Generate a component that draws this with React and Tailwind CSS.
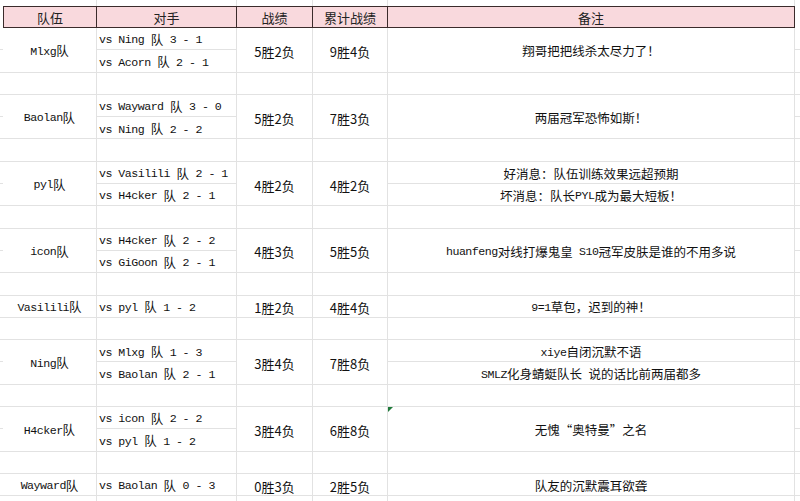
import React from "react";

const teams = [
  {
    name: "Mlxg队",
    matches: ["vs Ning 队 3 - 1", "vs Acorn 队 2 - 1"],
    record: "5胜2负",
    total: "9胜4负",
    notes: ["翔哥把把线杀太尽力了！"],
  },
  {
    name: "Baolan队",
    matches: ["vs Wayward 队 3 - 0", "vs Ning 队 2 - 2"],
    record: "5胜2负",
    total: "7胜3负",
    notes: ["两届冠军恐怖如斯！"],
  },
  {
    name: "pyl队",
    matches: ["vs Vasilili 队 2 - 1", "vs H4cker 队 2 - 1"],
    record: "4胜2负",
    total: "4胜2负",
    notes: ["好消息：队伍训练效果远超预期", "坏消息：队长PYL成为最大短板！"],
  },
  {
    name: "icon队",
    matches: ["vs H4cker 队 2 - 2", "vs GiGoon 队 2 - 1"],
    record: "4胜3负",
    total: "5胜5负",
    notes: ["huanfeng对线打爆鬼皇 S10冠军皮肤是谁的不用多说"],
  },
  {
    name: "Vasilili队",
    matches: ["vs pyl 队 1 - 2"],
    record: "1胜2负",
    total: "4胜4负",
    notes: ["9=1草包，迟到的神！"],
  },
  {
    name: "Ning队",
    matches: ["vs Mlxg 队 1 - 3", "vs Baolan 队 2 - 1"],
    record: "3胜4负",
    total: "7胜8负",
    notes: ["xiye自闭沉默不语", "SMLZ化身蜻蜓队长 说的话比前两届都多"],
  },
  {
    name: "H4cker队",
    matches: ["vs icon 队 2 - 2", "vs pyl 队 1 - 2"],
    record: "3胜4负",
    total: "6胜8负",
    notes: ["无愧“奥特曼”之名"],
    marker: true,
  },
  {
    name: "Wayward队",
    matches: ["vs Baolan 队 0 - 3"],
    record: "0胜3负",
    total: "2胜5负",
    notes: ["队友的沉默震耳欲聋"],
  },
];

const CJK = /([\u2000-\u206f\u3000-\u9fff\uff00-\uffef]+)/;

// latin runs in a narrow mono face, han runs in the CJK face
const Mixed = ({ text }) =>
  text.split(CJK).map((part, i) =>
    !part ? null : CJK.test(part) ? (
      <span key={i} className="font-['Noto_Sans_CJK_SC',sans-serif] text-[12.5px]">
        {part}
      </span>
    ) : (
      <span key={i} className="font-['Liberation_Mono',monospace] text-[11.6px] tracking-[-0.5px] whitespace-pre">
        {part}
      </span>
    )
  );

const grid = "border-[#e2e2e2]";
const head = "border-[#3b2b2b]";

const SpacerL = () => <div className={`col-start-1 border-b ${grid}`} />;
const SpacerR = () => <div className={`col-start-7 border-b ${grid}`} />;

const Cell = ({ span, className = "", children }) => (
  <div
    className={`${span ? "row-span-2" : ""} border-r border-b ${grid} flex items-center justify-center pt-[3px] text-[#111] leading-none ${className}`}
  >
    {children}
  </div>
);

const BlankRow = () => (
  <>
    <SpacerL />
    <Cell />
    <Cell />
    <Cell />
    <Cell />
    <Cell />
    <SpacerR />
  </>
);

const TeamBlock = ({ team }) => {
  const two = team.matches.length === 2;
  const splitNotes = team.notes.length === 2;
  const rec = "font-['Noto_Sans_CJK_SC',sans-serif] text-[13px] text-[#2a2a2a]";
  return (
    <>
      <SpacerL />
      <Cell span={two}>
        <Mixed text={team.name} />
      </Cell>
      <Cell className="justify-start pl-[2px]">
        <Mixed text={team.matches[0]} />
      </Cell>
      <Cell span={two} className={rec}>
        {team.record}
      </Cell>
      <Cell span={two} className={rec}>
        {team.total}
      </Cell>
      <Cell span={two && !splitNotes} className={team.marker ? "relative" : ""}>
        {team.marker && (
          <span className="absolute left-0 top-0 w-0 h-0 border-t-[5px] border-r-[5px] border-t-[#1f7a3a] border-r-transparent" />
        )}
        <Mixed text={team.notes[0]} />
      </Cell>
      <SpacerR />
      {two && (
        <>
          <SpacerL />
          <Cell className="justify-start pl-[2px]">
            <Mixed text={team.matches[1]} />
          </Cell>
          {splitNotes && (
            <Cell>
              <Mixed text={team.notes[1]} />
            </Cell>
          )}
          <SpacerR />
        </>
      )}
      <BlankRow />
    </>
  );
};

const headers = ["队伍", "对手", "战绩", "累计战绩", "备注"];

export default function App() {
  return (
    <div className="w-[800px] h-[501px] overflow-hidden bg-white">
      <div className="grid grid-cols-[3px_94px_140px_76px_75px_407px_5px] grid-rows-[6px_22px_repeat(22,22.3px)]">
        {/* strip above header */}
        <div />
        <div className={`border-r ${grid}`} />
        <div className={`border-r ${grid}`} />
        <div className={`border-r ${grid}`} />
        <div className={`border-r ${grid}`} />
        <div className={`border-r ${grid}`} />
        <div />

        {/* header */}
        <div />
        {headers.map((h, i) => (
          <div
            key={h}
            className={`bg-[#f9d9dd] border-t border-b border-r ${head} ${i === 0 ? "border-l" : ""} flex items-center justify-center pt-[1px] font-['Noto_Sans_CJK_SC',sans-serif] text-[13px] text-[#222] leading-none`}
          >
            {h}
          </div>
        ))}
        <div />

        {teams.map((t) => (
          <TeamBlock key={t.name} team={t} />
        ))}
      </div>
    </div>
  );
}
